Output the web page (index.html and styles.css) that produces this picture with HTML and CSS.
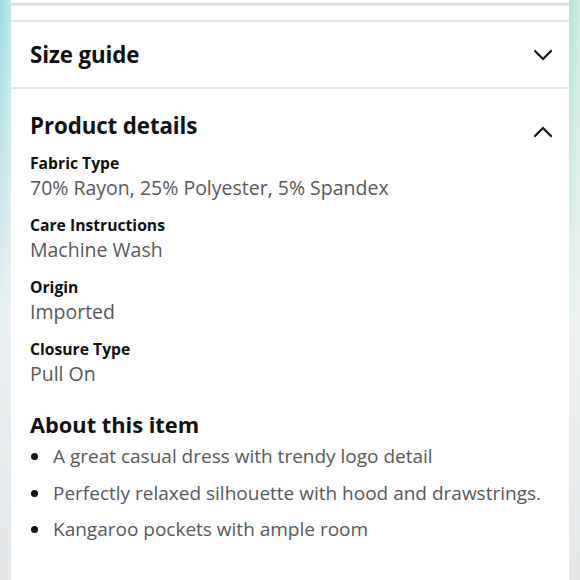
FILE: index.html
```html
<!DOCTYPE html>
<html lang="en">
<head>
<meta charset="utf-8">
<link rel="stylesheet" href="styles.css">
</head>
<body>
<div class="frame">
  <div class="card">
    <div class="top-rule"></div>
    <div class="spacer"></div>
    <section class="acc acc-closed">
      <h2 class="acc-title">Size guide</h2>
      <svg class="chev" width="20" height="12" viewBox="0 0 20 12"><path d="M2 2 L10 10 L18 2" fill="none" stroke="#111" stroke-width="2.2" stroke-linecap="round" stroke-linejoin="round"/></svg>
    </section>
    <section class="acc acc-open">
      <div class="acc-head">
        <h2 class="acc-title">Product details</h2>
        <svg class="chev chev-up" width="20" height="12" viewBox="0 0 20 12"><path d="M2 10 L10 2 L18 10" fill="none" stroke="#111" stroke-width="2.2" stroke-linecap="round" stroke-linejoin="round"/></svg>
      </div>
      <dl class="details">
        <div class="row"><dt>Fabric Type</dt><dd>70% Rayon, 25% Polyester, 5% Spandex</dd></div>
        <div class="row"><dt>Care Instructions</dt><dd>Machine Wash</dd></div>
        <div class="row"><dt>Origin</dt><dd>Imported</dd></div>
        <div class="row"><dt>Closure Type</dt><dd>Pull On</dd></div>
      </dl>
      <h2 class="about-title">About this item</h2>
      <ul class="bullets">
        <li>A great casual dress with trendy logo detail</li>
        <li>Perfectly relaxed silhouette with hood and drawstrings.</li>
        <li>Kangaroo pockets with ample room</li>
      </ul>
    </section>
  </div>
</div>
</body>
</html>
```
FILE: styles.css
```css
* { box-sizing: border-box; }
html, body { margin: 0; padding: 0; }
body {
  width: 580px;
  height: 580px;
  overflow: hidden;
  font-family: "Open Sans", "Noto Sans", sans-serif;
  color: #0f1111;
}
.frame {
  height: 580px;
  display: flex;
  justify-content: center;
  padding: 0 11px;
  background:
    linear-gradient(to bottom, rgba(255,255,255,0) 0, rgba(240,242,243,0.9) 55%, #e4e6e8 100%),
    linear-gradient(to right, #9adae3 0, #c0e8ec 11px, #fff 11px, #fff 569px, #aee7d2 569px, #cdeee3 580px);
}
.card {
  width: 558px;
  background: #fff;
}
.top-rule {
  height: 5px;
  border-bottom: 2px solid #dcdedf;
  box-shadow: 0 1px 0 #eceeee;
}
.spacer {
  height: 17px;
  border-bottom: 2px solid #e3e5e6;
}
.acc-closed {
  height: 67px;
  display: flex;
  align-items: center;
  justify-content: space-between;
  padding: 0 16px 0 19px;
  border-bottom: 2px solid #e3e5e6;
}
.acc-title {
  margin: 0;
  font-size: 22.3px;
  font-weight: 700;
  letter-spacing: -0.1px;
}
.chev { display: block; }
.acc-open {
  padding: 21px 16px 0 19px;
}
.acc-head {
  display: flex;
  justify-content: space-between;
  align-items: center;
}
.chev-up { margin-top: 12px; }
.details { margin: 11px 0 0; }
.row { margin-bottom: 14px; }
dt {
  font-size: 15.7px;
  font-weight: 700;
  line-height: 22px;
}
dd {
  margin: 2px 0 0;
  font-size: 19.5px;
  line-height: 24px;
  color: #565959;
}
.about-title {
  margin: 25px 0 0;
  font-size: 21.8px;
  font-weight: 700;
  line-height: 28px;
}
.bullets {
  list-style: none;
  margin: 5px 0 0;
  padding: 0;
}
.bullets li {
  position: relative;
  padding-left: 23px;
  font-size: 19px;
  line-height: 24px;
  color: #565959;
  white-space: nowrap;
  margin-bottom: 12.5px;
}
.bullets li::before {
  content: "";
  position: absolute;
  left: 1px;
  top: 9px;
  width: 7px;
  height: 7px;
  border-radius: 50%;
  background: #111;
}
```
